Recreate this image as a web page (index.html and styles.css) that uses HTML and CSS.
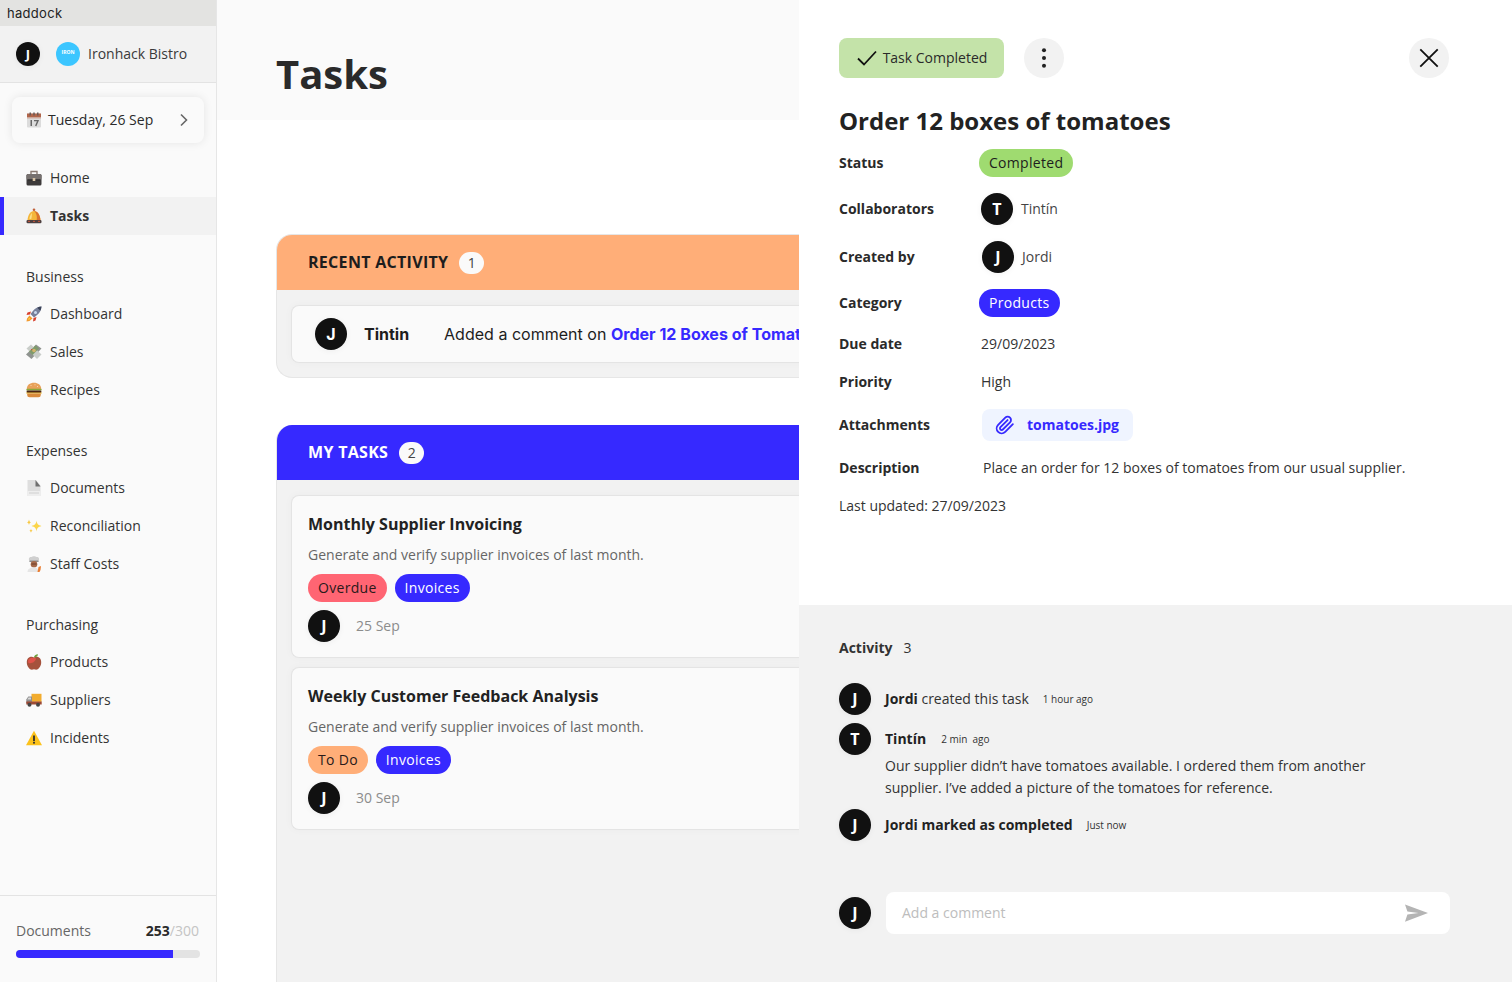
FILE: index.html
```html
<!DOCTYPE html>
<html lang="en">
<head>
<meta charset="utf-8">
<title>Tasks</title>
<link rel="stylesheet" href="styles.css">
</head>
<body>
<svg class="sprite" aria-hidden="true">
  <symbol id="i-cal" viewBox="0 0 16 16"><rect x="1" y="1.500" width="14" height="14" rx="1" fill="#dcdcdc"/><rect x="1" y="1.500" width="14" height="5" fill="#b0654a"/><rect x="1" y="5.500" width="14" height="1" fill="#e8e8e8"/><rect x="3.500" y="0.500" width="1.500" height="3" fill="#6a5a55"/><rect x="7.250" y="0.500" width="1.500" height="3" fill="#6a5a55"/><rect x="11" y="0.500" width="1.500" height="3" fill="#6a5a55"/><rect x="4.500" y="8" width="1.500" height="6" fill="#666"/><path d="M8 8.600h4l-2.300 5.400" fill="none" stroke="#666" stroke-width="1.400"/></symbol>
  <symbol id="i-brief" viewBox="0 0 16 16"><path d="M5 4V1.500h6V4" fill="none" stroke="#8a7a72" stroke-width="1.400"/><rect x="0.500" y="4" width="15" height="11.500" rx="1.500" fill="#3d3a3a"/><rect x="0.500" y="4" width="15" height="5.500" rx="1.500" fill="#77716f"/><rect x="2" y="9.500" width="12" height="1" fill="#2a2828"/><rect x="6.700" y="8" width="2.600" height="3" fill="#d8c3a5"/></symbol>
  <symbol id="i-bell" viewBox="0 0 16 16"><circle cx="8" cy="1.800" r="1.300" fill="#c0603a"/><path d="M1.500 13C1.500 7 4.500 3 8 3s6.500 4 6.500 10z" fill="#f4b63a"/><path d="M8 3c3.500 0 6.500 4 6.500 10H10.500C11.500 9 10.500 5 8 3z" fill="#d9722e"/><path d="M3.500 11c0-2.500 1-4.500 2.500-6-.3 2 0 4-.8 6z" fill="#fbe08a"/><rect x="0.500" y="12" width="15" height="3.200" rx="1.200" fill="#4d3f3f"/><rect x="2" y="12.800" width="2" height="1.200" fill="#b8533a"/><rect x="7" y="12.800" width="2" height="1.200" fill="#b8533a"/><rect x="12" y="12.800" width="2" height="1.200" fill="#b8533a"/></symbol>
  <symbol id="i-rocket" viewBox="0 0 16 16"><path d="M15.500.5c-4 .3-7 2-9 5l-2 2.500 3.500 3.500 2.500-2c3-2 4.700-5 5-9z" fill="#77809a"/><path d="M15.500.5c-1.500.1-3 .5-4.300 1.200l3.100 3.100c.7-1.300 1.100-2.800 1.200-4.300z" fill="#3a4258"/><path d="M5 5.500 1.500 6.500l-1 2.500 3.500-.5zM10.500 11l-1 3.500-2.500 1 .5-3.500z" fill="#d8402e"/><path d="M3.500 9.500 1 12.500l-.5 3 3-.5 3-2.500z" fill="#f29a2e"/><path d="M3 11.500 2 14l2.500-1z" fill="#fbd44a"/><circle cx="9.500" cy="6.500" r="1.500" fill="#c8d8ee"/></symbol>
  <symbol id="i-money" viewBox="0 0 16 16"><path d="M0 10.500 10 .5l5.500 4-10 10.500z" fill="#8f938f"/><path d="M.5 4.500 5 .5l10.500 10-4.500 4.500z" fill="#c9cdc9"/><path d="M3 7.500 9.500 1.500l3.500 3-6.500 6.500z" fill="#7f9a6c"/><circle cx="8" cy="6.500" r="1.800" fill="#d2b46a"/><rect x="5" y="5" width="1.200" height="1.200" fill="#c8503c"/></symbol>
  <symbol id="i-burger" viewBox="0 0 16 16"><path d="M.8 7C.8 3 4 .8 8 .8S15.200 3 15.200 7z" fill="#e8a15a"/><circle cx="5" cy="3.500" r=".5" fill="#fbe9c8"/><circle cx="9" cy="2.800" r=".5" fill="#fbe9c8"/><circle cx="11.500" cy="4.500" r=".5" fill="#fbe9c8"/><rect x="0.300" y="6.800" width="15.400" height="1.800" rx=".9" fill="#8ca83a"/><rect x="0.600" y="8.500" width="14.800" height="2.400" rx="1" fill="#4a2416"/><rect x="0.300" y="10.500" width="15.400" height="1.100" fill="#eec23a"/><path d="M1.200 11.500h13.600V13a2.300 2.300 0 0 1-2.300 2.300h-9A2.300 2.300 0 0 1 1.200 13z" fill="#d98a3c"/></symbol>
  <symbol id="i-doc" viewBox="0 0 16 16"><path d="M1.500 0h8.500l4.500 5.500V16h-13z" fill="#dedede"/><path d="M9.500 0v6.500h5z" fill="#6f6f6f"/><rect x="1.500" y="11" width="13" height="5" fill="#eee"/><rect x="3" y="12.500" width="10" height="1" fill="#cfcfcf"/></symbol>
  <symbol id="i-spark" viewBox="0 0 16 16"><path d="M10.500 2.500c.5 3.500 1.500 4.500 5 5.500-3.500 1-4.500 2-5 5.500-.5-3.500-1.500-4.500-5-5.500 3.500-1 4.500-2 5-5.500z" fill="#fbd54a"/><path d="M3 1.500c.3 1.800.8 2.300 2 2.800-1.200.5-1.700 1-2 2.800-.3-1.800-.8-2.300-2-2.800 1.200-.5 1.700-1 2-2.800zM5 10.500c.2 1.400.6 1.800 1.700 2.200-1.100.4-1.500.8-1.700 2.200-.2-1.400-.6-1.800-1.700-2.200 1.100-.4 1.500-.8 1.700-2.200z" fill="#f7c843"/></symbol>
  <symbol id="i-chef" viewBox="0 0 16 16"><path d="M3.500 4.500C2 3 3.500.500 5.500 1c1-1 4-1 5 0 2-.5 3.500 2 2 3.500v1.500h-9z" fill="#cfcfcf"/><rect x="3.500" y="4.500" width="9" height="1.500" fill="#8d8d8d"/><circle cx="8" cy="8.200" r="3.300" fill="#a5694a"/><path d="M5.500 7.500h5v1h-5z" fill="#6b3f2a"/><path d="M1.500 16c0-3 2.700-4.500 6-4.500 3 0 5 1 5.500 4.500z" fill="#e6e6e6"/><path d="M11.500 16l1-5 2.500-1-.5 4-1 2z" fill="#ea7e32"/></symbol>
  <symbol id="i-apple" viewBox="0 0 16 16"><path d="M8 3.500C5.500 2 .8 3 .8 8.500c0 4 3 7.200 5 7.200.8 0 1.400-.4 2.200-.4s1.400.4 2.200.4c2 0 5-3.200 5-7.200C15.200 3 10.500 2 8 3.500z" fill="#a5523c"/><path d="M2.500 5.500C4 3.500 8 3.200 10 4.500c-.5 3-4 5.500-7.500 4.500-.7-1.500-.5-2.500 0-3.500z" fill="#e0534a"/><path d="M8 3.500C8 1.800 9.500.3 12 .3 12 2 10.200 3.500 8 3.500z" fill="#6da03c"/></symbol>
  <symbol id="i-truck" viewBox="0 0 16 16"><rect x="5.500" y="1.800" width="10" height="8" fill="#f2ac2e"/><path d="M.3 11V7.500L2.300 4.500H6v6.500z" fill="#8f8f8f"/><path d="M1.300 7.500l1.300-2H5v2z" fill="#d8d8d8"/><rect x=".3" y="9.500" width="15.400" height="3" fill="#9c4a36"/><circle cx="3.500" cy="12.800" r="2" fill="#444"/><circle cx="12" cy="12.800" r="2" fill="#444"/></symbol>
  <symbol id="i-warn" viewBox="0 0 16 16"><path d="M8 .8 16 15.200H0z" fill="#fcc21b"/><rect x="7.100" y="5.500" width="1.800" height="5.500" fill="#2f2f2f"/><rect x="7.100" y="11.800" width="1.800" height="1.800" fill="#2f2f2f"/></symbol>
</svg>

<div class="app">
  <aside class="sidebar">
    <div class="window-bar">haddock</div>
    <div class="org">
      <span class="avatar avatar-sm">J</span>
      <span class="org-logo">IRON</span>
      <span class="org-name">Ironhack Bistro</span>
    </div>
    <div class="date-card">
      <svg class="nav-icon"><use href="#i-cal"/></svg>
      <span class="date-text">Tuesday, 26 Sep</span>
      <svg class="chevron" viewBox="0 0 10 14"><path d="M2 1.500l5.500 5.500-5.500 5.500" fill="none" stroke="#666" stroke-width="1.600"/></svg>
    </div>
    <nav class="nav">
      <a class="nav-row"><svg class="nav-icon"><use href="#i-brief"/></svg><span>Home</span></a>
      <a class="nav-row nav-active"><svg class="nav-icon"><use href="#i-bell"/></svg><span>Tasks</span></a>
      <div class="nav-label">Business</div>
      <a class="nav-row"><svg class="nav-icon"><use href="#i-rocket"/></svg><span>Dashboard</span></a>
      <a class="nav-row"><svg class="nav-icon"><use href="#i-money"/></svg><span>Sales</span></a>
      <a class="nav-row"><svg class="nav-icon"><use href="#i-burger"/></svg><span>Recipes</span></a>
      <div class="nav-label">Expenses</div>
      <a class="nav-row"><svg class="nav-icon"><use href="#i-doc"/></svg><span>Documents</span></a>
      <a class="nav-row"><svg class="nav-icon"><use href="#i-spark"/></svg><span>Reconciliation</span></a>
      <a class="nav-row"><svg class="nav-icon"><use href="#i-chef"/></svg><span>Staff Costs</span></a>
      <div class="nav-label">Purchasing</div>
      <a class="nav-row"><svg class="nav-icon"><use href="#i-apple"/></svg><span>Products</span></a>
      <a class="nav-row"><svg class="nav-icon"><use href="#i-truck"/></svg><span>Suppliers</span></a>
      <a class="nav-row"><svg class="nav-icon"><use href="#i-warn"/></svg><span>Incidents</span></a>
    </nav>
    <div class="quota">
      <div class="quota-line"><span>Documents</span><span class="quota-count"><b>253</b><i>/300</i></span></div>
      <div class="quota-track"><div class="quota-fill"></div></div>
    </div>
  </aside>

  <main class="main">
    <header class="main-header"><h1>Tasks</h1></header>
    <div class="main-body">
      <section class="board board-recent">
        <div class="board-head head-orange"><span class="head-text">RECENT ACTIVITY</span><span class="count">1</span></div>
        <div class="board-body">
          <div class="recent-card">
            <span class="avatar">J</span>
            <span class="recent-name">Tintin</span>
            <span class="recent-text">Added a comment on <a>Order 12 Boxes of Tomatoes</a></span>
          </div>
        </div>
      </section>
      <section class="board board-tasks">
        <div class="board-head head-blue"><span class="head-text">MY TASKS</span><span class="count">2</span></div>
        <div class="board-body">
          <article class="task-card">
            <h3>Monthly Supplier Invoicing</h3>
            <p>Generate and verify supplier invoices of last month.</p>
            <div class="tags"><span class="pill pill-red">Overdue</span><span class="pill pill-blue">Invoices</span></div>
            <div class="task-foot"><span class="avatar">J</span><span class="task-date">25 Sep</span></div>
          </article>
          <article class="task-card">
            <h3>Weekly Customer Feedback Analysis</h3>
            <p>Generate and verify supplier invoices of last month.</p>
            <div class="tags"><span class="pill pill-orange">To Do</span><span class="pill pill-blue">Invoices</span></div>
            <div class="task-foot"><span class="avatar">J</span><span class="task-date">30 Sep</span></div>
          </article>
        </div>
      </section>
    </div>
  </main>

  <aside class="panel">
    <div class="panel-top">
      <div class="panel-actions">
        <button class="btn-done">
          <svg class="btn-check" viewBox="0 0 20 20"><path d="M1 10.500l6 6L19 3.500" fill="none" stroke="#111" stroke-width="1.800"/></svg>
          <span class="btn-text">Task Completed</span>
        </button>
        <button class="btn-round">
          <svg class="btn-svg" viewBox="0 0 24 24"><circle cx="12" cy="3.500" r="2.200" fill="#222"/><circle cx="12" cy="12" r="2.200" fill="#222"/><circle cx="12" cy="20.500" r="2.200" fill="#222"/></svg>
        </button>
        <button class="btn-round btn-close">
          <svg class="btn-svg" viewBox="0 0 24 24"><path d="M2.500 2.500l19 19M21.500 2.500l-19 19" fill="none" stroke="#111" stroke-width="2"/></svg>
        </button>
      </div>
      <h2>Order 12 boxes of tomatoes</h2>
      <div class="details">
        <div class="label">Status</div><div class="value"><span class="pill pill-green">Completed</span></div>
        <div class="label">Collaborators</div><div class="value shift-2"><span class="avatar">T</span><span class="person">Tintín</span></div>
        <div class="label">Created by</div><div class="value shift-3"><span class="avatar">J</span><span class="person">Jordi</span></div>
        <div class="label">Category</div><div class="value"><span class="pill pill-blue">Products</span></div>
        <div class="label">Due date</div><div class="value shift-2">29/09/2023</div>
        <div class="label">Priority</div><div class="value shift-2">High</div>
        <div class="label">Attachments</div>
        <div class="value shift-3"><a class="attachment">
          <svg class="clip" viewBox="0 0 24 24"><path d="m21.440 11.050-9.190 9.190a6 6 0 0 1-8.490-8.490l8.570-8.570A4 4 0 1 1 18 8.840l-8.590 8.570a2 2 0 0 1-2.830-2.830l8.490-8.480" fill="none" stroke="#3629ff" stroke-width="2.200" stroke-linecap="round" stroke-linejoin="round"/></svg>
          tomatoes.jpg</a></div>
        <div class="label">Description</div><div class="value shift-4">Place an order for 12 boxes of tomatoes from our usual supplier.</div>
        <div class="updated">Last updated: 27/09/2023</div>
      </div>
    </div>
    <div class="panel-activity">
      <div class="activity-title"><b>Activity</b><span>3</span></div>
      <div class="activity-list">
        <div class="entry">
          <span class="avatar">J</span>
          <div class="entry-line"><span><b>Jordi</b> created this task</span><small>1 hour ago</small></div>
        </div>
        <div class="entry">
          <span class="avatar">T</span>
          <div class="entry-body">
            <div class="entry-line"><b>Tintín</b><small>2 min&nbsp; ago</small></div>
            <p>Our supplier didn’t have tomatoes available. I ordered them from another supplier. I’ve added a picture of the tomatoes for reference.</p>
          </div>
        </div>
        <div class="entry">
          <span class="avatar">J</span>
          <div class="entry-line"><b>Jordi marked as completed</b><small>Just now</small></div>
        </div>
      </div>
      <div class="composer">
        <span class="avatar">J</span>
        <div class="composer-box">
          <span class="composer-hint">Add a comment</span>
          <svg class="send" viewBox="0 0 24 18"><path d="M0 0 24 9 0 18 2.500 10.500 14 9 2.500 7.500z" fill="#b4b4b4"/></svg>
        </div>
      </div>
    </div>
  </aside>
</div>
</body>
</html>
```
FILE: styles.css
```css
* { box-sizing: border-box; }
html, body { margin: 0; height: 100%; }
body { font-family: "Open Sans", sans-serif; font-size: 14px; color: #2a2a2a; background: #fff; overflow: hidden; }
.sprite { width: 0; height: 0; position: absolute; }
.app { display: flex; height: 982px; width: 1512px; position: relative; overflow: hidden; }

.avatar { width: 32px; height: 32px; border-radius: 50%; background: #111; color: #fff; font-weight: 700; font-size: 16px; display: flex; align-items: center; justify-content: center; flex: none; box-shadow: 0 1px 6px rgba(0,0,0,.05); }
.avatar-sm { width: 24px; height: 24px; font-size: 13px; }

/* Sidebar */
.sidebar { width: 217px; flex: none; background: #fafafa; border-right: 1px solid #e6e6e6; display: flex; flex-direction: column; }
.window-bar { height: 26px; background: #e3e3e1; font-family: Inter, sans-serif; font-size: 13px; letter-spacing: .3px; line-height: 26px; padding-left: 7px; color: #222; }
.org { height: 57px; background: #f2f2f2; border-bottom: 1px solid #e3e3e3; display: flex; align-items: center; padding-left: 16px; }
.org-logo { width: 24px; height: 24px; margin-left: 16px; border-radius: 50%; background: #3cc6ff; color: #fff; font-size: 5px; font-weight: 700; display: flex; align-items: center; justify-content: center; padding-bottom: 5px; }
.org-name { margin-left: 8px; color: #3a3a3a; padding-bottom: 2px; }
.date-card { margin: 14px 12px 0; height: 46px; background: #fafafa; border-radius: 8px; box-shadow: 0 0 10px rgba(0,0,0,.09); display: flex; align-items: center; padding-left: 14px; color: #2a2a2a; }
.date-text { margin-left: 6px; padding-bottom: 2px; }
.chevron { width: 10px; height: 14px; margin-left: auto; margin-right: 15px; }
.nav { margin-top: 16px; display: flex; flex-direction: column; }
.nav-row { height: 38px; display: flex; align-items: center; padding-left: 26px; color: #333; }
.nav-row span { padding-bottom: 2px; }
.nav-icon { width: 16px; height: 16px; flex: none; margin-right: 8px; }
.date-card .nav-icon { margin-right: 0; }
.nav-active { background: #f2f2f2; font-weight: 700; box-shadow: inset 4px 0 0 #3629ff; }
.nav-label { height: 36px; margin-top: 24px; padding-left: 26px; line-height: 36px; color: #333; }
.quota { margin-top: auto; height: 87px; border-top: 1px solid #e3e3e3; padding: 24px 16px 0; }
.quota-line { display: flex; justify-content: space-between; color: #666; line-height: 22px; }
.quota-count { margin-right: 1px; }
.quota-count b { color: #2a2a2a; font-weight: 700; }
.quota-count i { color: #c4c4c4; font-style: normal; }
.quota-track { margin-top: 8px; height: 8px; background: #e3e3e3; border-radius: 4px; overflow: hidden; }
.quota-fill { width: 85.3%; height: 100%; background: #3629ff; }

/* Main */
.main { flex: 1; min-width: 0; display: flex; flex-direction: column; overflow: hidden; }
.main-header { height: 120px; flex: none; background: #fafafa; padding: 28px 0 0 59px; display: flex; align-items: center; }
.main-header h1 { margin: 0; font-size: 40px; font-weight: 700; color: #2a2a2a; line-height: 48px; }
.main-body { flex: 1; min-height: 0; padding: 114px 0 0 59px; display: flex; flex-direction: column; gap: 47px; }
.board { background: #f2f2f2; border: 1px solid #e6e6e6; border-right: 0; border-radius: 16px 0 0 16px; overflow: hidden; }
.board-tasks { flex: 1; border-radius: 16px 0 0 0; border-top: 0; border-bottom: 0; }
.board-head { height: 55px; margin-left: -1px; padding-left: 32px; display: flex; align-items: center; gap: 11px; font-size: 16px; font-weight: 700; letter-spacing: .3px; }
.head-text { padding-bottom: 2px; }
.head-orange { background: #ffae78; color: #1d1d1d; }
.head-blue { background: #3629ff; color: #fff; }
.count { width: 25px; height: 22px; border-radius: 11px; background: #fafafa; color: #444; font-size: 14px; font-weight: 400; letter-spacing: 0; display: flex; align-items: center; justify-content: center; }
.board-body { padding: 15px 0 14px 14px; display: flex; flex-direction: column; gap: 9px; }
.recent-card { height: 58px; background: #fafafa; border: 1px solid #e4e4e4; border-right: 0; border-radius: 8px 0 0 8px; box-shadow: 0 0 8px rgba(0,0,0,.03); display: flex; align-items: center; padding-left: 23px; font-family: Inter, sans-serif; font-size: 16px; color: #1d1d1d; white-space: nowrap; }
.recent-name { margin-left: 17px; width: 80px; font-weight: 700; }
.recent-text { letter-spacing: .02px; }
.recent-text a { color: #3629ff; font-weight: 700; }
.task-card { height: 163px; background: #fafafa; border: 1px solid #e4e4e4; border-right: 0; border-radius: 8px 0 0 8px; box-shadow: 0 0 8px rgba(0,0,0,.03); padding: 16px 0 15px 16px; display: flex; flex-direction: column; gap: 8px; }
.task-card h3 { margin: 0; font-size: 16px; font-weight: 700; line-height: 24px; color: #222; }
.task-card p { margin: 0; line-height: 22px; color: #666; }
.tags { display: flex; gap: 8px; }
.pill { height: 28px; padding: 0 10px; border-radius: 14px; display: inline-flex; align-items: center; line-height: 1; letter-spacing: .3px; }
.pill-red { background: #ff6573; color: #2a1a1a; }
.pill-blue { background: #3629ff; color: #fff; }
.pill-orange { background: #ffae78; color: #2a1a1a; }
.pill-green { background: #9fdb70; color: #1d1d1d; }
.task-foot { display: flex; align-items: center; gap: 16px; }
.task-date { color: #8c8c8c; padding-bottom: 2px; }

/* Panel */
.panel { position: absolute; left: 799px; top: 0; bottom: 0; width: 713px; background: #fff; display: flex; flex-direction: column; }
.panel-top { height: 605px; flex: none; padding: 38px 63px 0 40px; }
.panel-actions { display: flex; align-items: center; gap: 20px; }
.btn-done { height: 40px; width: 165px; border: 0; border-radius: 8px; background: #c4e3a9; font: inherit; color: #2a2a2a; display: flex; align-items: center; justify-content: center; gap: 6px; padding: 0 0 0 1px; }
.btn-text { padding-bottom: 2px; }
.btn-check { width: 20px; height: 20px; }
.btn-round { width: 40px; height: 40px; border: 0; border-radius: 50%; background: #f2f2f2; display: flex; align-items: center; justify-content: center; padding: 0; }
.btn-round .btn-svg { width: 22px; height: 22px; }
.btn-close { margin-left: auto; }
.panel-top h2 { margin: 25px 0 10px; font-size: 24px; font-weight: 700; line-height: 36px; color: #222; }
.details { display: grid; grid-template-columns: 140px 1fr; gap: 16px 0; align-items: center; }
.label { font-weight: 700; color: #2a2a2a; padding-bottom: 2px; }
.value { display: flex; align-items: center; min-height: 22px; line-height: 22px; color: #333; }
.shift-2 { padding-left: 2px; }
.shift-3 { padding-left: 3px; }
.shift-4 { padding-left: 4px; }
.person { margin-left: 8px; color: #444; }
.attachment { height: 32px; width: 151px; border-radius: 8px; background: #eff4ff; color: #3629ff; font-weight: 700; display: flex; align-items: center; gap: 12px; padding-left: 13px; }
.clip { width: 20px; height: 20px; }
.updated { grid-column: 1 / -1; line-height: 22px; color: #333; }

.panel-activity { flex: 1; background: #f2f2f2; padding: 32px 62px 0 40px; display: flex; flex-direction: column; }
.activity-title { display: flex; gap: 11px; line-height: 22px; color: #333; }
.activity-title b { font-weight: 700; }
.activity-list { margin-top: 24px; display: flex; flex-direction: column; gap: 8px; }
.entry { display: flex; gap: 14px; align-items: flex-start; }
.entry-line { min-height: 32px; display: flex; align-items: center; gap: 14px; color: #333; }
.entry-line > b, .entry-line > span { padding-bottom: 2px; }
.entry-line b { font-weight: 700; color: #222; }
.entry-line small { font-size: 10px; color: #333; }
.entry-body { width: 500px; padding-bottom: 2px; }
.entry-body small { margin-left: 1px; }
.entry-body p { margin: 0; line-height: 22px; color: #333; }
.composer { margin-top: 51px; display: flex; align-items: center; gap: 15px; }
.composer-box { flex: 1; height: 42px; background: #fff; border-radius: 8px; display: flex; align-items: center; justify-content: space-between; padding: 0 22px 0 16px; color: #bdbdbd; }
.composer-hint { padding-bottom: 2px; }
.send { width: 23px; height: 18px; }
```
